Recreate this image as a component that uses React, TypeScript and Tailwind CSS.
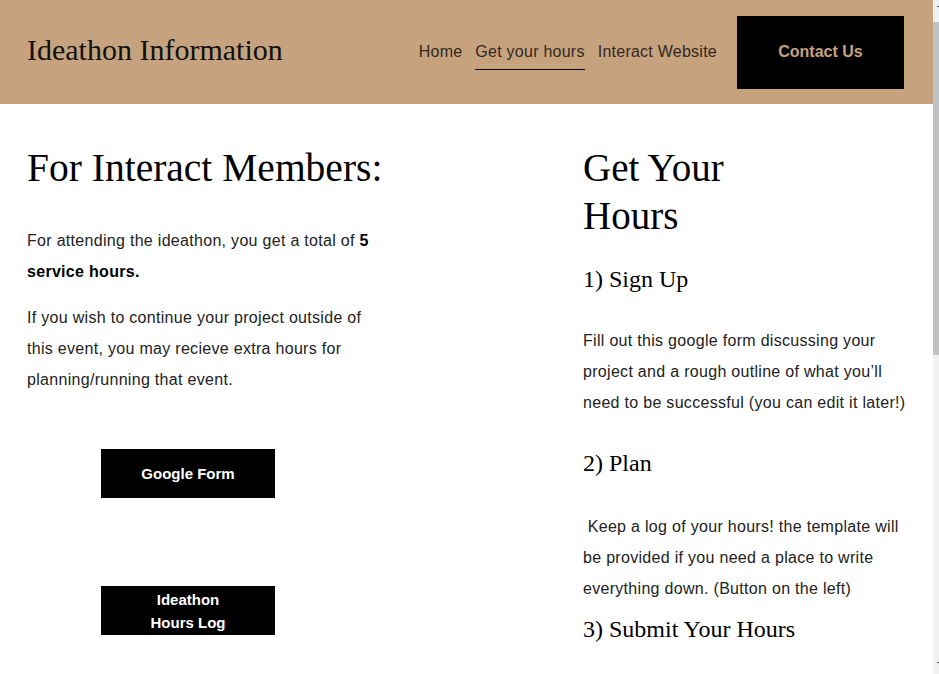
const navLinks = [
  { label: 'Home', active: false },
  { label: 'Get your hours', active: true },
  { label: 'Interact Website', active: false },
];

function Scrollbar() {
  return (
    <div className="flex h-full w-[6px] shrink-0 flex-col bg-[#f1f1f1]">
      <div className="h-[22px] pt-[6px] pl-[4px]">
        <div className="h-px w-[2px] bg-[#505050]" />
      </div>
      <div className="h-[333px] bg-[#c1c1c1]" />
      <div className="flex-1" />
      <div className="h-[12px] pl-[4px]">
        <div className="h-px w-[2px] bg-[#505050]" />
      </div>
    </div>
  );
}

export default function App() {
  return (
    <div className="flex h-[674px] w-full overflow-hidden bg-white font-['Liberation_Sans',Arial,sans-serif]">
      <div className="min-w-0 flex-1">
        <header className="flex h-[104px] items-center bg-[#c6a27e] pl-[27px] pr-[29px]">
          <h1 className="mb-[5px] font-['Liberation_Serif','Times_New_Roman',serif] text-[30px] leading-[30px] text-[#111]">
            Ideathon Information
          </h1>
          <nav className="ml-auto flex items-center gap-[13px] text-[16px] tracking-[0.25px] text-[#33281d]">
            {navLinks.map((l) => (
              <a
                key={l.label}
                className={`border-b pt-[5px] pb-[5px] leading-[24px] ${l.active ? 'border-black' : 'border-transparent'}`}
              >
                {l.label}
              </a>
            ))}
          </nav>
          <a className="ml-[20px] flex h-[73px] w-[167px] items-center justify-center bg-black text-[16px] font-bold text-[#c6a27e]">
            Contact Us
          </a>
        </header>

        <main className="flex pt-[40px] text-[16px] leading-[31px] tracking-[0.3px] text-[#222]">
          <section className="w-[583px] shrink-0 pl-[27px]">
            <h2 className="font-['Liberation_Serif','Times_New_Roman',serif] text-[39.5px] leading-[48px] tracking-normal text-black">
              For Interact Members:
            </h2>
            <div className="w-[352px]">
              <p className="mt-[33px]">
                For attending the ideathon, you get a total of <span className="font-bold text-black">5 service hours.</span>
              </p>
              <p className="mt-[15px]">
                If you wish to continue your project outside of this event, you may recieve extra hours for planning/running that event.
              </p>
            </div>
            <div className="ml-[74px] flex flex-col tracking-normal">
              <a className="mt-[54px] flex h-[49px] w-[174px] items-center justify-center bg-black text-[15px] font-bold text-white">
                Google Form
              </a>
              <a className="mt-[88px] flex h-[49px] w-[174px] flex-col items-center justify-center bg-black text-center text-[15px] font-bold leading-[23px] text-white">
                <span>Ideathon</span>
                <span>Hours Log</span>
              </a>
            </div>
          </section>

          <section className="w-[324px] shrink-0">
            <h2 className="font-['Liberation_Serif','Times_New_Roman',serif] text-[39px] leading-[48px] tracking-normal text-black">
              Get Your
              <br />
              Hours
            </h2>
            <h3 className="mt-[23px] font-['Liberation_Serif','Times_New_Roman',serif] text-[24px] leading-[32px] tracking-normal text-black">
              1) Sign Up
            </h3>
            <p className="mt-[30px]">
              Fill out this google form discussing your project and a rough outline of what you’ll need to be successful (you can edit it later!)
            </p>
            <h3 className="mt-[29px] font-['Liberation_Serif','Times_New_Roman',serif] text-[24px] leading-[32px] tracking-normal text-black">
              2) Plan
            </h3>
            <p className="mt-[32px]">
              {'\u00a0'}Keep a log of your hours! the template will be provided if you need a place to write everything down. (Button on the left)
            </p>
            <h3 className="mt-[9px] font-['Liberation_Serif','Times_New_Roman',serif] text-[24px] leading-[32px] tracking-normal text-black">
              3) Submit Your Hours
            </h3>
          </section>
        </main>
      </div>
      <Scrollbar />
    </div>
  );
}
